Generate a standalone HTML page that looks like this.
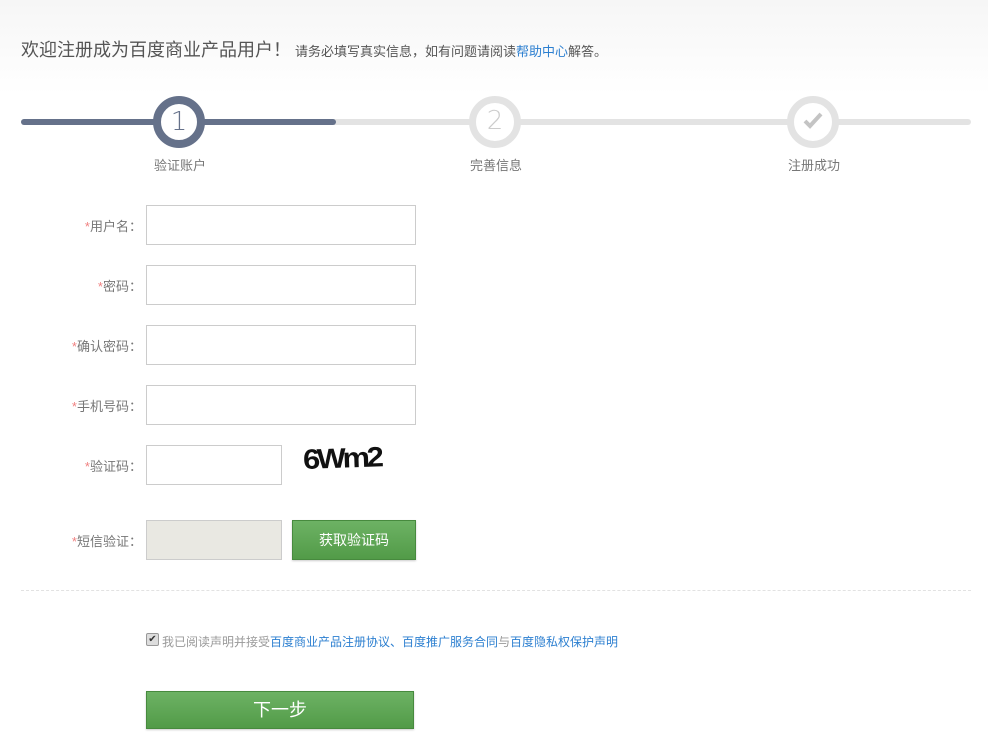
<!DOCTYPE html>
<html><head><meta charset="utf-8"><style>
body{margin:0;width:988px;height:755px;position:relative;font-family:"Liberation Sans","Noto Sans CJK SC",sans-serif;background:linear-gradient(#f6f6f6 0,#fff 95px);overflow:hidden;color:#666}
.a{position:absolute}
.t1{left:21px;top:36px;font-size:18px;color:#555;white-space:nowrap}
.t1 small{font-size:13px;color:#555;margin-left:4px}
.t1 a{color:#2c7fd0}
.bar{height:6px;top:119px;border-radius:3px}
.c{width:52px;height:52px;border-radius:50%;box-sizing:border-box;background:#fff;text-align:center;line-height:36px;font-size:26px;font-weight:100;font-family:"DejaVu Sans",sans-serif}
.lbl{font-size:13px;color:#777;top:155px;width:100px;text-align:center}
.fl{font-size:13px;color:#777;width:134px;text-align:right;left:8px}
.fl b{color:#f08080;font-weight:normal}
.in{left:146px;width:270px;height:40px;box-sizing:border-box;border:1px solid #ccc;background:#fff}
.btn{background:linear-gradient(#6db264,#529b48);border:1px solid #478a3e;box-sizing:border-box;color:#fff;text-align:center;box-shadow:0 1px 2px rgba(0,0,0,.2)}
</style></head><body>
<div class="a t1">欢迎注册成为百度商业产品用户！<small>请务必填写真实信息，如有问题请阅读<a>帮助中心</a>解答。</small></div>
<div class="a bar" style="left:21px;width:950px;background:#e3e3e3"></div>
<div class="a bar" style="left:21px;width:315px;background:#65718a"></div>
<div class="a c" style="left:153px;top:96px;border:8px solid #65718a;color:#65718a;-webkit-text-stroke:0">1</div>
<div class="a c" style="left:469px;top:96px;border:7px solid #e3e3e3;color:#ccc">2</div>
<div class="a c" style="left:787px;top:96px;border:7px solid #e3e3e3;color:#ccc"><svg width="24" height="24" viewBox="0 0 24 24" style="margin-top:6px"><path d="M4 12l5 5L20 5" fill="none" stroke="#c4c4c4" stroke-width="4"/></svg></div>
<div class="a lbl" style="left:130px">验证账户</div>
<div class="a lbl" style="left:446px">完善信息</div>
<div class="a lbl" style="left:764px">注册成功</div>

<div class="a fl" style="top:216px"><b>*</b>用户名：</div><div class="a in" style="top:205px"></div>
<div class="a fl" style="top:276px"><b>*</b>密码：</div><div class="a in" style="top:265px"></div>
<div class="a fl" style="top:336px"><b>*</b>确认密码：</div><div class="a in" style="top:325px"></div>
<div class="a fl" style="top:396px"><b>*</b>手机号码：</div><div class="a in" style="top:385px"></div>
<div class="a fl" style="top:456px"><b>*</b>验证码：</div><div class="a in" style="top:445px;width:136px"></div>
<div class="a" style="left:303px;top:444px;font-size:28px;font-weight:bold;color:#111;letter-spacing:-3px;transform:rotate(-2deg) scaleX(1.1);transform-origin:left">6Wm2</div>
<div class="a fl" style="top:531px"><b>*</b>短信验证：</div><div class="a in" style="top:520px;width:136px;background:#e9e8e2"></div>
<div class="a btn" style="left:292px;top:520px;width:124px;height:40px;line-height:38px;font-size:14px">获取验证码</div>
<div class="a" style="left:21px;top:590px;width:950px;border-top:1px dashed #e2e2e2"></div>
<div class="a" style="left:146px;top:633px;width:11px;height:11px;border:1px solid #999;background:#ddd;border-radius:2px;font-size:10px;line-height:11px;text-align:center;color:#333">✔</div>
<div class="a" style="left:162px;top:633px;font-size:12px;color:#999;white-space:nowrap">我已阅读声明并接受<span style="color:#2c7fd0">百度商业产品注册协议、百度推广服务合同</span>与<span style="color:#2c7fd0">百度隐私权保护声明</span></div>
<div class="a btn" style="left:146px;top:691px;width:268px;height:38px;line-height:36px;font-size:18px">下一步</div>
</body></html>
